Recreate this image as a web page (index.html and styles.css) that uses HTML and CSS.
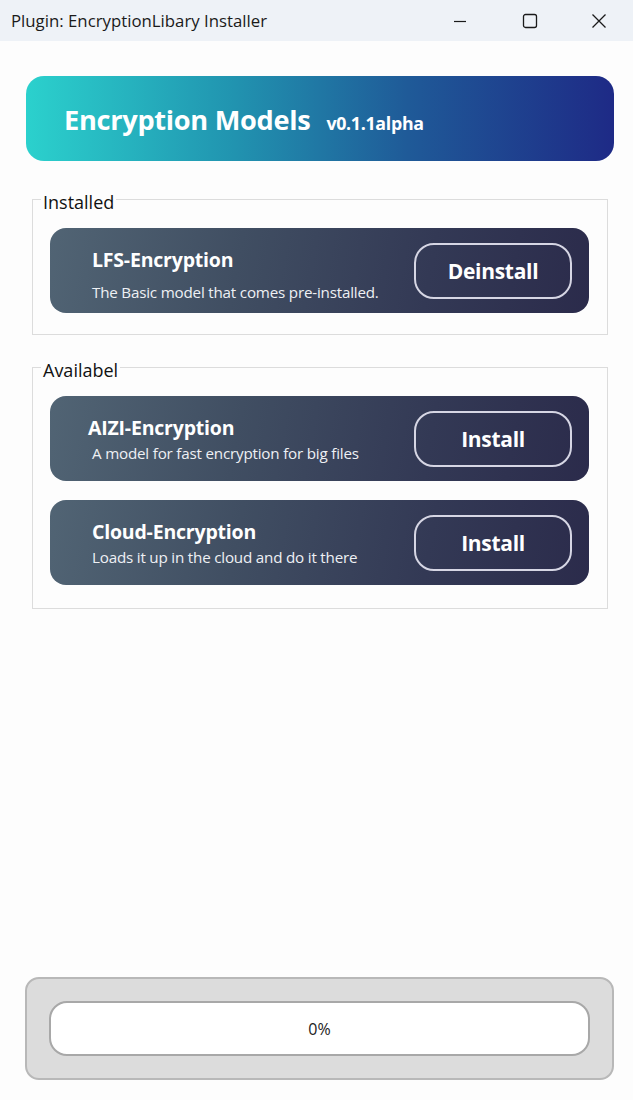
FILE: index.html
```html
<!DOCTYPE html>
<html lang="en">
<head>
<meta charset="utf-8">
<title>Plugin: EncryptionLibary Installer</title>
<link rel="stylesheet" href="styles.css">
</head>
<body>
<div class="window">
  <div class="titlebar">
    <span class="title">Plugin: EncryptionLibary Installer</span>
    <div class="controls">
      <span class="ctrl">
        <svg width="14" height="14" viewBox="0 0 14 14"><path d="M1 7.5H13" stroke="#1a1a1a" stroke-width="1.2" fill="none"/></svg>
      </span>
      <span class="ctrl">
        <svg width="16" height="16" viewBox="0 0 16 16"><rect x="1.5" y="1.5" width="13" height="13" rx="2" stroke="#1a1a1a" stroke-width="1.3" fill="none"/></svg>
      </span>
      <span class="ctrl">
        <svg width="16" height="16" viewBox="0 0 16 16"><path d="M1.5 1.5L14.5 14.5M14.5 1.5L1.5 14.5" stroke="#1a1a1a" stroke-width="1.3" fill="none"/></svg>
      </span>
    </div>
  </div>

  <main class="content">
    <header class="banner">
      <h1 class="banner-title">Encryption Models</h1>
      <span class="banner-version">v0.1.1alpha</span>
    </header>

    <fieldset class="group group-installed">
      <legend class="group-label">Installed</legend>
      <div class="card">
        <div class="card-text card-text-wide">
          <div class="card-title">LFS-Encryption</div>
          <div class="card-desc">The Basic model that comes pre-installed.</div>
        </div>
        <button class="card-btn">Deinstall</button>
      </div>
    </fieldset>

    <fieldset class="group group-available">
      <legend class="group-label">Availabel</legend>
      <div class="card">
        <div class="card-text">
          <div class="card-title card-title-shift">AIZI-Encryption</div>
          <div class="card-desc">A model for fast encryption for big files</div>
        </div>
        <button class="card-btn">Install</button>
      </div>
      <div class="card">
        <div class="card-text">
          <div class="card-title">Cloud-Encryption</div>
          <div class="card-desc">Loads it up in the cloud and do it there</div>
        </div>
        <button class="card-btn">Install</button>
      </div>
    </fieldset>
  </main>

  <footer class="progress-area">
    <div class="progress">0%</div>
  </footer>
</div>
</body>
</html>
```

FILE: styles.css
```css
* { box-sizing: border-box; }

html, body {
  margin: 0;
  padding: 0;
  background: #fdfdfd;
}

body {
  font-family: "Open Sans", "Noto Sans", "Liberation Sans", sans-serif;
  color: #111;
}

.window {
  width: 633px;
  height: 1100px;
  display: flex;
  flex-direction: column;
  background: #fdfdfd;
}

.titlebar {
  height: 41px;
  flex: none;
  display: flex;
  align-items: center;
  justify-content: space-between;
  background: #eef2f7;
  padding-left: 11px;
}

.title {
  font-size: 16.8px;
  color: #1a1a1a;
}

.controls {
  display: flex;
  align-items: center;
  height: 100%;
}

.ctrl {
  width: 70px;
  height: 100%;
  display: flex;
  align-items: center;
  justify-content: center;
}

.ctrl:last-child { width: 68px; }

.content {
  flex: 1;
  padding: 35px 19px 0 26px;
}

.banner {
  height: 85px;
  border-radius: 18px;
  background: linear-gradient(90deg, #2bd1cd 0%, #2194b0 35%, #1f5a98 65%, #1e2a86 100%);
  display: flex;
  align-items: baseline;
  padding: 25px 0 0 38px;
  color: #fff;
}

.banner-title {
  margin: 0;
  font-size: 27.2px;
  font-weight: 700;
  letter-spacing: -0.3px;
}

.banner-version {
  margin-left: 16px;
  font-size: 17.8px;
  font-weight: 700;
  letter-spacing: -0.3px;
}

.group {
  margin: 24px 6px 0 6px;
  border: 1px solid #dcdcdc;
  padding: 15px 18px 21px 17px;
  min-width: 0;
}

.group-available {
  margin-top: 18px;
  padding-bottom: 23px;
}

.group-label {
  font-size: 18px;
  color: #111;
  padding: 6px 2px 0 2px;
  margin-left: -9px;
  line-height: 22px;
}

.card {
  height: 85px;
  border-radius: 16px;
  background: linear-gradient(100deg, #516474 0%, #404e62 35%, #333955 70%, #2b2b4b 100%);
  display: flex;
  align-items: center;
  justify-content: space-between;
  padding: 0 17px 0 42px;
  color: #fff;
}

.card + .card { margin-top: 19px; }

.card-text {
  display: flex;
  flex-direction: column;
  gap: 2px;
  padding-top: 1px;
}

.card-text-wide {
  gap: 9px;
  padding-top: 8px;
}

.card-title {
  font-size: 19.5px;
  font-weight: 700;
  line-height: 26px;
  letter-spacing: -0.2px;
}

.card-title-shift { margin-left: -4px; }

.card-desc {
  font-size: 15.2px;
  line-height: 20px;
  color: #eef0f4;
  letter-spacing: -0.2px;
}

.card-btn {
  width: 158px;
  height: 56px;
  border: 2px solid #d6d6e4;
  border-radius: 20px;
  background: transparent;
  color: #fff;
  font-family: inherit;
  font-size: 21px;
  font-weight: 700;
  letter-spacing: -0.3px;
  padding: 0;
}

.progress-area {
  flex: none;
  margin: 0 19px 20px 25px;
  height: 103px;
  background: #dcdcdc;
  border: 2px solid #b8b8b8;
  border-radius: 14px;
  padding: 22px 22px 0 22px;
}

.progress {
  height: 55px;
  background: #fff;
  border: 2px solid #a8a8a8;
  border-radius: 18px;
  display: flex;
  align-items: center;
  justify-content: center;
  font-size: 16px;
  color: #222;
}
```
